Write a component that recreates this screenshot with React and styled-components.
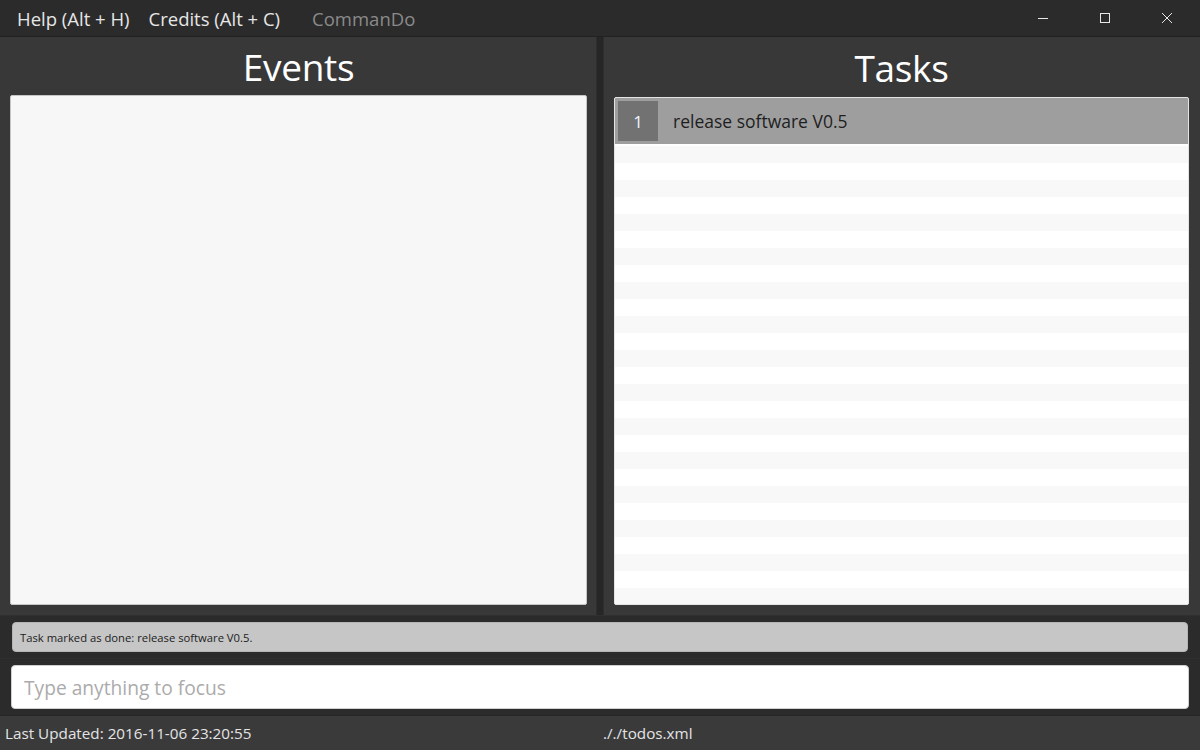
import React from 'react';
import styled, { createGlobalStyle } from 'styled-components';

const GlobalStyle = createGlobalStyle`
  body {
    margin: 0;
    background: #383838;
    font-family: "Open Sans", "Noto Sans", sans-serif;
  }
`;

const Window = styled.div`
  width: 1200px;
  height: 750px;
  display: flex;
  flex-direction: column;
  background: #383838;
  overflow: hidden;
`;

const TitleBar = styled.div`
  height: 36px;
  flex: none;
  display: flex;
  align-items: center;
  background: #2b2b2b;
  border-bottom: 1px solid #222;
  padding-left: 17px;
`;

const MenuItem = styled.span`
  font-size: 18.5px;
  color: ${p => (p.$dim ? '#8a8a8a' : '#e6e6e6')};
  margin-right: ${p => p.$gap || 19}px;
  white-space: nowrap;
`;

const Controls = styled.div`
  margin-left: auto;
  display: flex;
  height: 100%;
  padding-right: 2px;
`;

const ControlButton = styled.div`
  width: 62px;
  height: 100%;
  display: flex;
  align-items: center;
  justify-content: center;
`;

const Main = styled.div`
  height: 578px;
  flex: none;
  display: flex;
`;

const Panel = styled.div`
  width: 596px;
  display: flex;
  flex-direction: column;
  padding: 0 ${p => p.$right}px ${p => p.$bottom}px ${p => p.$left}px;
  box-sizing: border-box;
`;

const Divider = styled.div`
  width: 8px;
  background: #262626;
  border-left: 1px solid #2e2e2e;
  border-right: 1px solid #2e2e2e;
  box-sizing: border-box;
`;

const Heading = styled.h1`
  margin: 0;
  height: ${p => p.$h}px;
  flex: none;
  display: flex;
  align-items: center;
  justify-content: center;
  font-weight: 400;
  font-size: 37px;
  color: #fff;
  letter-spacing: -0.3px;
`;

const ListBox = styled.div`
  flex: 1;
  background: ${p => (p.$plain ? '#f7f7f7' : '#fff')};
  border: 1px solid ${p => (p.$plain ? '#c6c6c6' : '#e4e4e4')};
  border-radius: 2px;
  overflow: hidden;
  display: flex;
  flex-direction: column;
`;

const TaskCell = styled.div`
  flex: none;
  padding-bottom: 2px;
  background: #fff;
`;

const TaskRow = styled.div`
  height: 46px;
  display: flex;
  align-items: center;
  background: #9e9e9e;
  padding-left: 3px;
`;

const IndexBox = styled.div`
  width: 40px;
  height: 40px;
  display: flex;
  align-items: center;
  justify-content: center;
  background: #727272;
  color: #eaf4ff;
  font-size: 17px;
`;

const TaskName = styled.span`
  margin-left: 15px;
  font-size: 17.5px;
  color: #1e1e1e;
`;

const EmptyCell = styled.div`
  height: 17px;
  flex: none;
  background: ${p => (p.$odd ? '#f8f8f8' : '#fff')};
`;

const Bottom = styled.div`
  height: 100px;
  flex: none;
  background: #2b2b2b;
  border-top: 1px solid #2f2f2f;
  display: flex;
  flex-direction: column;
  box-sizing: border-box;
`;

const ResultSection = styled.div`
  padding: 6px 12px 6px 12px;
  border-bottom: 1px solid #303030;
`;

const ResultBox = styled.div`
  height: 30px;
  background: #c6c6c6;
  border: 1px solid #b5b5b5;
  border-radius: 4px;
  box-sizing: border-box;
  display: flex;
  align-items: center;
  padding-left: 7px;
  font-size: 11.25px;
  color: #1c1c1c;
`;

const CommandSection = styled.div`
  padding: 6px 11px 0 11px;
`;

const CommandInput = styled.input`
  width: 100%;
  height: 44px;
  box-sizing: border-box;
  border: 1px solid #d0d0d0;
  border-radius: 4px;
  background: #fff;
  padding: 0 12px;
  font-family: "Open Sans", "Noto Sans", sans-serif;
  font-size: 19.2px;
  color: #222;
  outline: none;
  &::placeholder {
    color: #ababab;
  }
`;

const StatusBar = styled.div`
  flex: 1;
  display: grid;
  grid-template-columns: 600px 600px;
  align-items: center;
  background: #3a3a3a;
  border-top: 1px solid #262626;
`;

const StatusText = styled.span`
  padding-left: ${p => p.$pad}px;
  font-size: 15.25px;
  color: #e4e4e4;
`;

const stripes = Array.from({ length: 28 }, (_, i) => i);

export default function App() {
  return (
    <Window>
      <GlobalStyle />
      <TitleBar>
        <MenuItem>Help (Alt + H)</MenuItem>
        <MenuItem $gap={32}>Credits (Alt + C)</MenuItem>
        <MenuItem $dim>CommanDo</MenuItem>
        <Controls>
          <ControlButton>
            <svg width="12" height="12" viewBox="0 0 12 12">
              <path d="M1 6.5h10" stroke="#e8e8e8" strokeWidth="1" />
            </svg>
          </ControlButton>
          <ControlButton>
            <svg width="12" height="12" viewBox="0 0 12 12">
              <rect x="1.5" y="1.5" width="9" height="9" fill="none" stroke="#e8e8e8" strokeWidth="1" />
            </svg>
          </ControlButton>
          <ControlButton>
            <svg width="12" height="12" viewBox="0 0 12 12">
              <path d="M1 1l10 10M11 1L1 11" stroke="#e8e8e8" strokeWidth="1" />
            </svg>
          </ControlButton>
        </Controls>
      </TitleBar>
      <Main>
        <Panel $left={10} $right={9} $bottom={10}>
          <Heading $h={58}>Events</Heading>
          <ListBox $plain />
        </Panel>
        <Divider />
        <Panel $left={10} $right={11} $bottom={10}>
          <Heading $h={60}>Tasks</Heading>
          <ListBox>
            <TaskCell>
              <TaskRow>
                <IndexBox>1</IndexBox>
                <TaskName>release software V0.5</TaskName>
              </TaskRow>
            </TaskCell>
            {stripes.map(i => (
              <EmptyCell key={i} $odd={i % 2 === 0} />
            ))}
          </ListBox>
        </Panel>
      </Main>
      <Bottom>
        <ResultSection>
          <ResultBox>Task marked as done: release software V0.5.</ResultBox>
        </ResultSection>
        <CommandSection>
          <CommandInput placeholder="Type anything to focus" />
        </CommandSection>
      </Bottom>
      <StatusBar>
        <StatusText $pad={5}>Last Updated: 2016-11-06 23:20:55</StatusText>
        <StatusText $pad={3}>././todos.xml</StatusText>
      </StatusBar>
    </Window>
  );
}
